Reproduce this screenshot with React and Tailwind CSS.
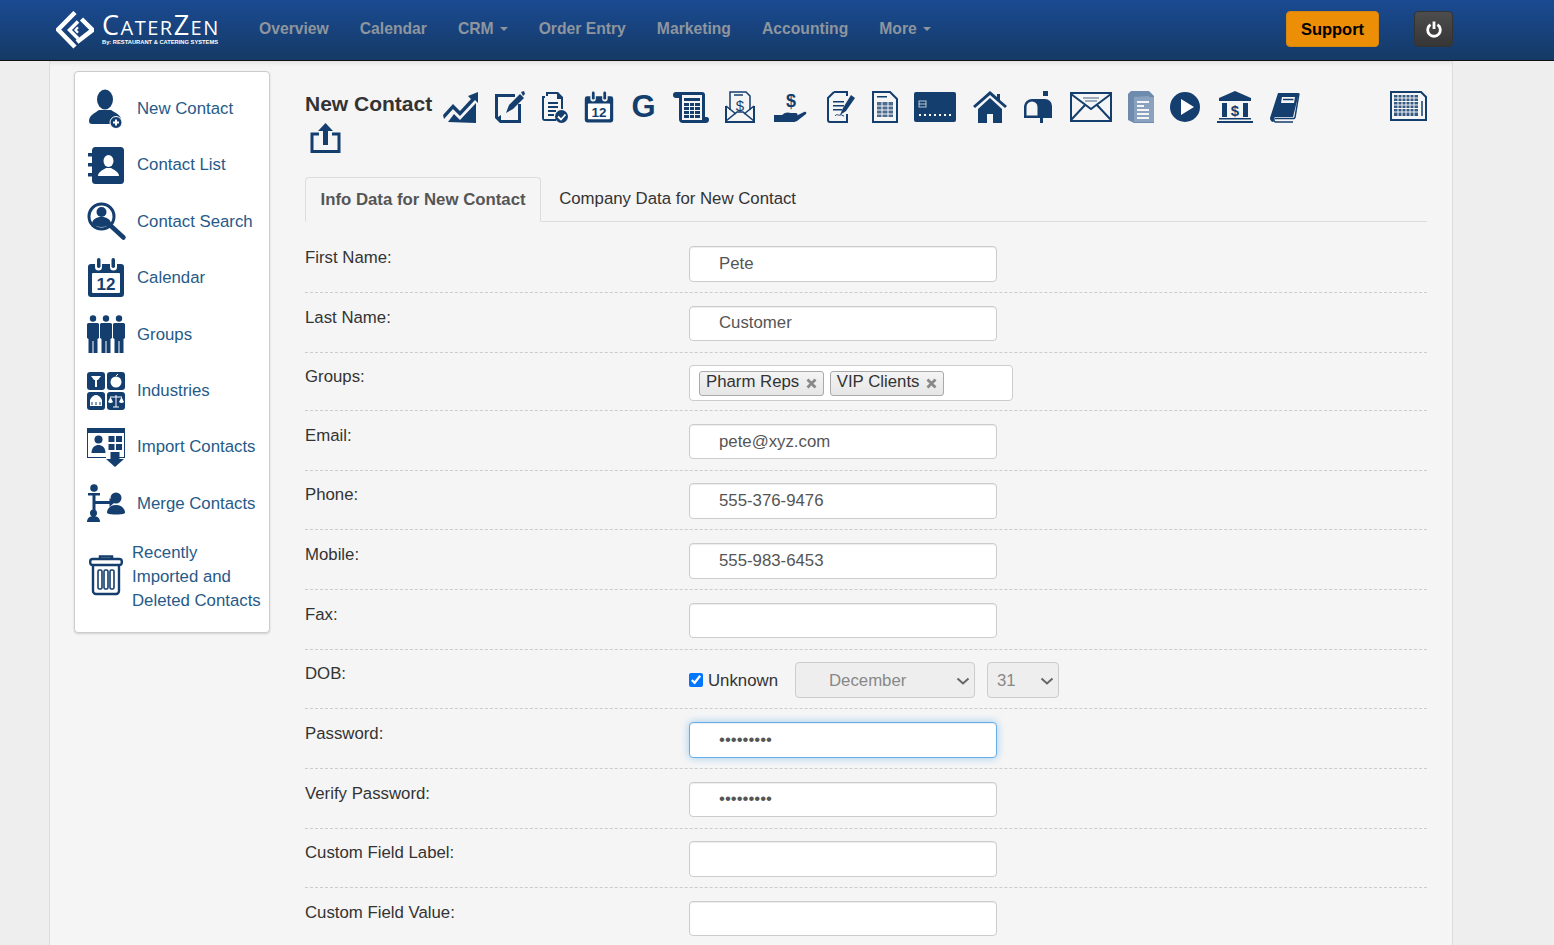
import React from "react";

const C = "#143e6e";
const Svg = ({ w, h, className = "", children }) => (
  <svg width={w} height={h} viewBox={`0 0 ${w} ${h}`} className={`block shrink-0 overflow-visible ${className}`} fill={C} stroke="none">{children}</svg>
);
const S = { fill: "none", stroke: C };
const W = { fill: "none", stroke: "#fff" };

const CalendarIcon = ({ w = 38, h = 39 }) => (
  <svg width={w} height={h} viewBox="0 0 38 39" className="block shrink-0">
    <path fill={C} d="M4 6h4v3a3.500 3.500 0 0 0 7 0V6h8v3a3.500 3.500 0 0 0 7 0V6h4a3 3 0 0 1 3 3v27a3 3 0 0 1-3 3H4a3 3 0 0 1-3-3V9a3 3 0 0 1 3-3z" />
    <rect x="10" y="0" width="3.500" height="10" rx="1.700" fill={C} />
    <rect x="24.500" y="0" width="3.500" height="10" rx="1.700" fill={C} />
    <rect x="5" y="15" width="28" height="20" rx="1" fill="#fff" />
    <text x="19" y="32" textAnchor="middle" fontFamily="Liberation Sans, sans-serif" fontWeight="700" fontSize="17" fill={C}>12</text>
  </svg>
);

const side = {
  newContact: (
    <Svg w={38} h={40}>
      <ellipse cx="18" cy="10.500" rx="8" ry="10" />
      <path d="M5 35c-2 0-3-1-3-3 0-6 6-8 10-11h12c4 3 9 4 10 9l-9 5z" />
      <circle cx="29" cy="33.500" r="6" stroke="#fff" strokeWidth="1" />
      <path d="M26 32.500h2v-2h2v2h2v2h-2v2h-2v-2h-2z" fill="#fff" />
    </Svg>
  ),
  list: (
    <Svg w={38} h={39}>
      <rect x="5" y="1" width="32" height="37" rx="3.500" />
      <path d="M1 7h8v3.500H1zM1 17h8v3.500H1zM1 27h8v3.500H1z" />
      <ellipse cx="21.500" cy="15" rx="5" ry="6" fill="#fff" />
      <path d="M11 30c0-4 5-6 8-8h5c3 2 8 4 8 8z" fill="#fff" />
    </Svg>
  ),
  search: (
    <Svg w={38} h={38}>
      <circle cx="14.500" cy="14.500" r="12.500" {...S} strokeWidth="3" />
      <circle cx="14.500" cy="10" r="5" />
      <path d="M5 21c1-4 4-5 7-6h5c3 1 6 2 7 6-2 3-5 4-9.500 4S7 24 5 21z" />
      <path d="M24 24l12.500 11.500" {...S} strokeWidth="4.500" strokeLinecap="round" />
    </Svg>
  ),
  groups: (
    <Svg w={38} h={38}>
      {[0, 13, 26].map((x) => (
        <g key={x} transform={`translate(${x} 0)`}>
          <circle cx="6" cy="3.500" r="3.200" />
          <path d="M1.500 8h9A1.500 1.500 0 0 1 12 9.500V23l-1.500 1v14H6.500V26h-1v12H1.500V24L0 23V9.500A1.500 1.500 0 0 1 1.500 8z" />
        </g>
      ))}
    </Svg>
  ),
  industries: (
    <Svg w={38} h={38}>
      <rect x="0" y="0" width="18" height="18" rx="3" />
      <rect x="20" y="0" width="18" height="18" rx="3" />
      <rect x="0" y="20" width="18" height="18" rx="3" />
      <rect x="20" y="20" width="18" height="18" rx="3" />
      <path d="M4 4h10l-3 4H10v7H8V8H7z" fill="#fff" />
      <circle cx="29" cy="10" r="5.500" fill="#fff" /><path d="M29 4l2-2" {...W} strokeWidth="1" />
      <path d="M3 34v-6c1-3 4-5 6-5s5 2 6 5v6z" fill="#fff" />
      <path d="M5 30v3M9 30v3M13 30v3" stroke={C} strokeWidth="1" />
      <path d="M29 23v12M23 25h12M26 35h6" {...W} strokeWidth="1" />
      <path d="M21 30a3 2 0 0 0 5 0l-2.500-5zM32 30a3 2 0 0 0 5 0l-2.500-5z" fill="#fff" />
    </Svg>
  ),
  import: (
    <Svg w={38} h={39}>
      <path d="M0 0h38v30H24v-1h13V5H1v24h18v1H0z" />
      <circle cx="11.500" cy="11.500" r="4" />
      <path d="M4.500 25c0-6 4-8 7-8s7 2 7 8z" />
      <path d="M21.500 8h6v6h-6zM29 8h6v6h-6zM21.500 16h6v6h-6zM29 16h6v6h-6z" />
      <path d="M23.500 24h9v7H37l-9 8-9-8h4.500z" />
    </Svg>
  ),
  merge: (
    <Svg w={38} h={38}>
      <circle cx="7" cy="4" r="3.800" />
      <path d="M1 9h12v2.500H8.500V17h14v-3l5 4.500-5 4.500v-3h-14v6l-3 .500V11.500H1z" />
      <circle cx="6.500" cy="29" r="3.500" />
      <path d="M0 38c0-4 3-6 6.500-6s6.500 2 6.500 6z" />
      <circle cx="29" cy="14" r="5.500" />
      <path d="M20 29c0-5 4-8 9-8s9 3 9 8c-2 2-16 2-18 0z" />
    </Svg>
  ),
  trash: (
    <Svg w={34} h={40}>
      <path d="M11 4V1.500h12V4" {...S} strokeWidth="2.500" />
      <rect x="1.200" y="4" width="31.600" height="6" rx="2.500" {...S} strokeWidth="2.400" />
      <path d="M4 10v26a3 3 0 0 0 3 3h20a3 3 0 0 0 3-3V10" {...S} strokeWidth="2.400" />
      <rect x="9" y="15" width="4" height="19" rx="1.500" {...S} strokeWidth="1.600" />
      <rect x="15" y="15" width="4" height="19" rx="1.500" {...S} strokeWidth="1.600" />
      <rect x="21" y="15" width="4" height="19" rx="1.500" {...S} strokeWidth="1.600" />
    </Svg>
  ),
};

const tb = [
  [34, <Svg w={35} h={32} key="t"><path d="M0 24l10-11 7 7L28 8l-3-3 10-4v11l-3-3-15 16-7-7L1 28z" /><path d="M5 31l6-8 6 6 16-17v20z" /></Svg>],
  [30, <Svg w={31} h={32} key="n"><path d="M1 3h20v3H4v20l3-2v5h17V13h3v19H6l-5-5z" /><path d="M12 22l3-8L26 3l4 4-11 11z" /><path d="M27 1l3-1 1 3-2 2z" /></Svg>],
  [26, <Svg w={27} h={32} key="c"><path d="M5 1h12l5 5v12h-2V8h-4V3H7v2H5zM1 5h3v2H3v21h12v2H4a3 3 0 0 1-3-3z" /><path d="M7 11h10v2H7zM7 15h10v2H7zM7 19h8v2H7zM7 23h6v2H7z" /><circle cx="20.500" cy="25.500" r="6.500" /><path d="M17 25.500l3 3 4.500-5" {...W} strokeWidth="1.800" /></Svg>],
  [31, <div key="cal" className="w-[30px]"><CalendarIcon w={30} h={32} /></div>],
  [24, <Svg w={23} h={32} key="g"><text x="11.500" y="26" textAnchor="middle" fontFamily="Liberation Sans, sans-serif" fontWeight="700" fontSize="31">G</text></Svg>],
  [35, <Svg w={36} h={32} key="l"><path d="M3 1h26a3 3 0 0 1 3 3v22h1.500a2.500 2.500 0 0 1 2.500 2.500A3.500 3.500 0 0 1 32.500 32H10a4 4 0 0 1-4-4V7H3a3 3 0 0 1-3-3 3 3 0 0 1 3-3z" /><rect x="9" y="4" width="20" height="25" fill="#f5f5f5" /><path d="M11 7h16v3H11zM11 12h5v3h-5zM17 12h4v3h-4zM22 12h5v3h-5zM11 16h5v3h-5zM17 16h4v3h-4zM22 16h5v3h-5zM11 20h5v3h-5zM17 20h4v3h-4zM22 20h5v3h-5zM11 24h5v3h-5zM17 24h4v3h-4zM22 24h5v3h-5z" /></Svg>],
  [31, <Svg w={30} h={32} key="e"><path d="M1 15v16h28V15" {...S} strokeWidth="2" /><path d="M1 30l11-9h6l11 9M1 15l10 8M29 15l-10 8" {...S} strokeWidth="1.600" /><path d="M5 19V1h16l4 4v14" {...S} strokeWidth="1.500" /><path d="M9 4h9" {...S} strokeWidth="1.500" /><text x="15" y="20" textAnchor="middle" fontFamily="Liberation Sans, sans-serif" fontWeight="400" fontSize="15" fill={C}>$</text></Svg>],
  [36, <Svg w={34} h={32} key="h"><text x="18" y="16" textAnchor="middle" fontFamily="Liberation Sans, sans-serif" fontWeight="700" fontSize="18" fill={C}>$</text><path d="M1 24h8c3-3 6-3 9-2h5c2 0 2 3 0 3h-6 6l8-4c2-1 3 1 2 2l-9 7c-2 1-3 1-5 1H1z" /></Svg>],
  [29, <Svg w={29} h={32} key="k"><path d="M8 1h13v4M8 1L2 7v22a2 2 0 0 0 2 2h17v-8" {...S} strokeWidth="2" /><path d="M7 10h11v1.500H7zM7 14h11v1.500H7zM7 18h9v1.500H7z" /><path d="M9 25c2-3 3 0 5-1s2 1 4 1" {...S} strokeWidth="1" /><path d="M14 24l3-7L25 4l4 3-9 13z" /></Svg>],
  [25, <Svg w={26} h={32} key="s"><path d="M1 1h17l7 7v23H1z" {...S} strokeWidth="2" /><path d="M5 5h10v1.500H5z" /><path d="M5 11h16v15H5z" opacity=".75" /><path d="M5 15h16M5 19h16M5 23h16M10 11v15M16 11v15" stroke="#f5f5f5" strokeWidth="1" /></Svg>],
  [42, <Svg w={42} h={32} key="cc"><rect x="0" y="1" width="42" height="30" rx="2" /><rect x="5" y="10" width="7" height="6" fill="none" stroke="#fff" strokeWidth="1" opacity=".7" /><path d="M5 13h7" stroke="#fff" opacity=".7" /><path d="M5 24h32" stroke="#fff" strokeWidth="2" strokeDasharray="2 3" /></Svg>],
  [33, <Svg w={34} h={32} key="ho"><path d="M0 15L17 0l7 6V3h3v6l7 6-2 2L17 4 2 17z" /><path d="M5 18L17 7l12 11v14h-9v-9h-6v9H5z" /></Svg>],
  [30, <Svg w={30} h={32} key="m"><path d="M15 3h5V0h5v5h-5V3zM9 8h13a7 7 0 0 1 7 7v12H20v5h-3v-5H1V15a8 8 0 0 1 8-7z" /><path d="M9 10.500a5.500 5.500 0 0 1 5.500 5.500v8.500H3.500V16A5.500 5.500 0 0 1 9 10.500z" fill="#f5f5f5" /></Svg>],
  [41, <Svg w={42} h={32} key="en"><rect x="1" y="2" width="40" height="28" {...S} strokeWidth="2" /><path d="M1 3l20 15L41 3M1 29l14-15M41 29L27 14" {...S} strokeWidth="2" /><path d="M13 7h16M15 10h12" {...S} strokeWidth="1.200" opacity=".8" /></Svg>],
  [25, <Svg w={26} h={32} key="d"><path d="M3 0h18l5 5v27H6l-6-3V3z" fill="#6e8bae" /><path d="M6 5h15v1M6 6h20v25H6z" fill="#8aa2c0" /><path d="M9 10h12v2H9zM9 14h7v2H9zM9 18h12v2H9zM9 22h12v2H9zM9 26h12v2H9z" fill="#f5f5f5" /></Svg>],
  [30, <Svg w={30} h={32} key="p"><circle cx="15" cy="16" r="15" /><path d="M11 8l13 8-13 8z" fill="#fff" /></Svg>],
  [36, <Svg w={36} h={32} key="b"><path d="M18 0l16 7v3H2V7z" /><path d="M2 27h32v1.500H2zM0 30h36v2H0zM5 12h5v14H5zM26 12h5v14h-5z" /><text x="18" y="24.500" textAnchor="middle" fontFamily="Liberation Sans, sans-serif" fontWeight="700" fontSize="15">$</text></Svg>],
  [30, <Svg w={30} h={32} key="bk"><path d="M8 2h21l-6 24H5a4 4 0 0 0-1 4l-1 1a4 4 0 0 1-3-4z" /><path d="M5 27.500h19l1-1 4-24" {...S} strokeWidth="1.500" /><path d="M4.500 27.500a2 2 0 0 0 1 3.500H23" {...S} strokeWidth="1.500" /><path d="M12 6h13l-1 6H11z" fill="#f5f5f5" /><path d="M13 8.500h10.500" stroke={C} strokeWidth="1.500" /></Svg>],
];

const Row = ({ label, first, h = "h-[59.65px]", last, children }) => (
  <div className={`flex items-start border-dashed border-[#ccc] ${last ? "" : "border-b"} ${first ? "h-[71px] pt-6" : `${h} pt-[12.6px]`}`}>
    <label className="w-[384px] shrink-0 text-[16.8px] leading-6 text-[#333]">{label}</label>
    {children}
  </div>
);

const Field = ({ value = "", type = "text", focus }) => (
  <input
    type={type}
    defaultValue={value}
    className={`block h-[35.6px] w-[308px] rounded-[4px] border bg-white pl-[29px] pr-3 text-[16.8px] text-[#555] outline-none ${
      focus
        ? "border-[#66afe9] shadow-[inset_0_1px_1px_rgba(0,0,0,0.075),0_0_8px_rgba(102,175,233,0.6)]"
        : "border-[#ccc] shadow-[inset_0_1px_1px_rgba(0,0,0,0.075)]"
    }`}
  />
);

const Chip = ({ children }) => (
  <span className="flex h-[25px] items-center gap-[7px] rounded-[3px] border border-[#aaa] bg-gradient-to-b from-[#f4f4f4] to-[#e6e6e6] pb-px pl-[6px] pr-[5.500px] text-[16.8px] leading-none text-[#333]">
    {children}
    <svg width="11" height="11" viewBox="0 0 11 11" className="mt-px"><path d="M1.500 1.500l8 8M9.500 1.500l-8 8" stroke="#888" strokeWidth="2.800" /></svg>
  </span>
);

const Chevron = () => (
  <svg width="14" height="8" viewBox="0 0 14 8" className="pointer-events-none absolute right-[5px] top-[15px]"><path d="M1.500 1.500L7 6.500l5.500-5" fill="none" stroke="#666" strokeWidth="2" /></svg>
);

const SideItem = ({ icon, children }) => (
  <a className="flex h-[56.4px] items-center pl-3">
    <span className="flex w-[50px] shrink-0 items-center">{icon}</span>
    <span className="text-[16.8px] text-[#265a88]">{children}</span>
  </a>
);

const nav = ["Overview", "Calendar", "CRM", "Order Entry", "Marketing", "Accounting", "More"];

export default function App() {
  return (
    <div className="h-screen overflow-hidden bg-[#eee] font-['Liberation_Sans',Arial,sans-serif]">
      <header className="flex h-[61px] items-center border-b border-[#111] bg-gradient-to-b from-[#1a4a92] to-[#153a66] pb-[2px] pl-14 pr-[101px]">
        <a className="mt-[2px] flex w-[188px] items-center">
          <svg width="38" height="38" viewBox="0 0 38 38" className="shrink-0">
            <path d="M19 1.500L2 18.700 19 36" fill="none" stroke="#fff" strokeWidth="4.500" />
            <path d="M25.500 8L36.500 19 21 31" fill="none" stroke="#fff" strokeWidth="4.500" />
            <path d="M22 10.500L13.500 19l8.500 8.500" fill="none" stroke="#fff" strokeWidth="3.500" />
            <path d="M22 16.200L19.500 19l2.500 2.800" fill="none" stroke="#fff" strokeWidth="2.200" />
          </svg>
          <span className="ml-2 flex flex-col text-white">
            <span className="whitespace-nowrap font-['Open_Sans',sans-serif] text-[20px] leading-[22px] tracking-[1.500px]">
              <span className="text-[27px] leading-[22px]">C</span>ATER<span className="text-[27px] leading-[22px]">Z</span>EN
            </span>
            <span className="whitespace-nowrap text-[5.750px] font-bold leading-[7px]">By: RESTAURANT &amp; CATERING SYSTEMS</span>
          </span>
        </a>
        <nav className="ml-[15px] flex items-center gap-[31px]">
          {nav.map((n) => (
            <a key={n} className="flex items-center gap-[6px] whitespace-nowrap text-[15.700px] font-bold text-[#8e959e]">
              {n}
              {(n === "CRM" || n === "More") && <span className="h-0 w-0 border-x-4 border-t-4 border-x-transparent border-t-[#8e959e]" />}
            </a>
          ))}
        </nav>
        <button className="ml-auto h-9 w-[93px] rounded-[4px] border border-[#d58512] bg-[#ec8f06] text-[16.500px] font-bold text-black">Support</button>
        <button className="ml-[35px] flex h-9 w-[39px] items-center justify-center rounded-[4px] border border-[#333] bg-gradient-to-b from-[#4d4d4d] to-[#363636]">
          <svg width="16" height="17" viewBox="0 0 16 17"><path d="M4.500 3.700a6.300 6.300 0 1 0 7 0" fill="none" stroke="#fff" strokeWidth="2.800" /><path d="M8 .5v7.500" stroke="#fff" strokeWidth="2.800" /></svg>
        </button>
      </header>

      <main className="ml-[49px] flex h-[884px] w-[1404px] items-start border-x border-[#ddd] bg-[#f5f5f5] shadow-[inset_0_6px_6px_-6px_rgba(0,0,0,0.15)]">
        <aside className="ml-6 mt-[10px] h-[562px] w-[196px] shrink-0 rounded-[4px] border border-[#ccc] bg-white pt-[8.500px] shadow-[0_1px_2px_rgba(0,0,0,0.15)]">
          <SideItem icon={side.newContact}>New Contact</SideItem>
          <SideItem icon={side.list}>Contact List</SideItem>
          <SideItem icon={side.search}>Contact Search</SideItem>
          <SideItem icon={<CalendarIcon />}>Calendar</SideItem>
          <SideItem icon={side.groups}>Groups</SideItem>
          <SideItem icon={side.industries}>Industries</SideItem>
          <SideItem icon={side.import}>Import Contacts</SideItem>
          <SideItem icon={side.merge}>Merge Contacts</SideItem>
          <a className="mt-[9.500px] flex items-center pl-[14px]">
            <span className="-mt-[5px] w-[43px] shrink-0">{side.trash}</span>
            <span className="text-[16.8px] leading-6 text-[#265a88]">Recently<br />Imported and<br />Deleted Contacts</span>
          </a>
        </aside>

        <section className="ml-[35px] w-[1122px] shrink-0 pt-[30px]">
          <div className="flex flex-wrap items-start gap-x-[17px]">
            <h1 className="mr-[-6px] mt-[-1px] h-8 text-[21px] font-bold leading-[28px] text-[#333]">New Contact</h1>
            {tb.map(([w, node], i) => (
              <span key={i} style={{ width: w }} className="block h-8 shrink-0">{node}</span>
            ))}
            <Svg w={37} h={30} className="ml-auto">
              <path d="M1 1h30l5 5v23H1z" {...S} strokeWidth="2" />
              <path d="M4 4h24v21H4z" opacity=".85" />
              <path d="M4 7h24M4 10.500h24M4 14h24M4 17.500h24M4 21h24M8 4v21M12 4v21M16 4v21M20 4v21M24 4v21" stroke="#f5f5f5" strokeWidth="1" />
              <path d="M32 10v15" {...S} strokeWidth="1.500" />
            </Svg>
            <div className="h-0 basis-full" />
            <Svg w={31} h={30} className="ml-[5px]">
              <path d="M15.500 0l7.500 8h-5v14h-5V8H8z" />
              <path d="M9 11H2v17.500h27V11h-7" {...S} strokeWidth="3" />
            </Svg>
          </div>

          <div className="mt-6 flex h-[45px] items-end border-b border-[#ddd]">
            <div className="relative top-px flex h-[45px] items-center rounded-t-[4px] border border-[#ddd] border-b-[#f5f5f5] bg-[#f5f5f5] px-[14.500px] text-[16.8px] font-bold text-[#555]">
              Info Data for New Contact
            </div>
            <div className="ml-[18px] flex h-[44px] items-center text-[16.8px] text-[#333]">Company Data for New Contact</div>
          </div>

          <Row label="First Name:" first><Field value="Pete" /></Row>
          <Row label="Last Name:"><Field value="Customer" /></Row>
          <Row label="Groups:" h="h-[58.5px]">
            <div className="flex h-[35.6px] w-[324px] items-center gap-[6px] rounded-[4px] border border-[#ccc] bg-white pl-[9px]">
              <Chip>Pharm Reps</Chip>
              <Chip>VIP Clients</Chip>
            </div>
          </Row>
          <Row label="Email:"><Field value="pete@xyz.com" /></Row>
          <Row label="Phone:"><Field value="555-376-9476" /></Row>
          <Row label="Mobile:"><Field value="555-983-6453" /></Row>
          <Row label="Fax:"><Field /></Row>
          <Row label="DOB:">
            <div className="flex h-9 items-center">
              <input type="checkbox" defaultChecked className="m-0 h-[14px] w-[14px]" />
              <span className="ml-[5px] text-[16.8px] text-[#333]">Unknown</span>
              <div className="relative ml-[17px]">
                <select disabled className="block h-9 w-[180px] appearance-none rounded-[4px] border border-[#ccc] bg-[#eee] pl-[33px] text-[16.8px] text-[#888] opacity-100">
                  <option>December</option>
                </select>
                <Chevron />
              </div>
              <div className="relative ml-3">
                <select disabled className="block h-9 w-[72px] appearance-none rounded-[4px] border border-[#ccc] bg-[#eee] pl-[9px] text-[16.8px] text-[#888] opacity-100">
                  <option>31</option>
                </select>
                <Chevron />
              </div>
            </div>
          </Row>
          <Row label="Password:"><Field type="password" value="password1" focus /></Row>
          <Row label="Verify Password:"><Field type="password" value="password1" /></Row>
          <Row label="Custom Field Label:"><Field /></Row>
          <Row label="Custom Field Value:" last><Field /></Row>
        </section>
      </main>
    </div>
  );
}
